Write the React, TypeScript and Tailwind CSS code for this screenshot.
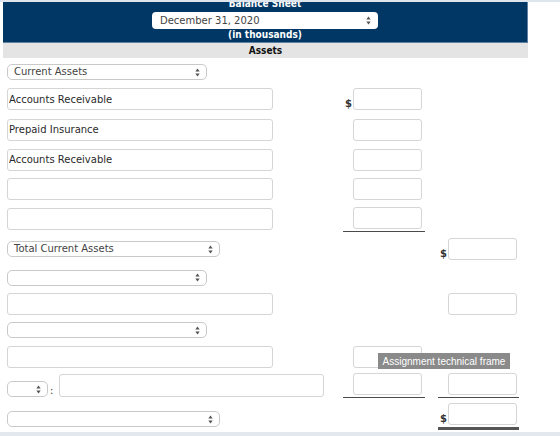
import clsx from 'clsx'
import type { ReactNode } from 'react'

function Arrows() {
  return (
    <svg width="5" height="9" viewBox="0 0 5 9" className="shrink-0">
      <path d="M2.5 0.5 L4.7 3.6 L0.3 3.6 Z" fill="#555" />
      <path d="M2.5 8.5 L4.7 5.4 L0.3 5.4 Z" fill="#555" />
    </svg>
  )
}

function Dropdown({ label, className }: { label?: string; className: string }) {
  return (
    <div
      className={clsx(
        'h-[16px] flex items-center justify-between rounded-[5px] border border-[#c9c9c9] bg-white pl-[6px] pr-[6px] text-[10px] text-[#444]',
        className
      )}
    >
      <span className="leading-none">{label}</span>
      <Arrows />
    </div>
  )
}

function Field({ value, className }: { value?: string; className: string }) {
  return (
    <input
      readOnly
      value={value ?? ''}
      className={clsx(
        'h-[22px] rounded-[3px] border border-[#d5d5d5] bg-white px-[1px] text-[10px] text-[#2a2a2a] outline-none',
        className
      )}
    />
  )
}

type Amount = { dollar?: boolean; rule?: 'single' | 'double' } | null

function Money({ amount, col }: { amount: Amount; col: 2 | 3 }) {
  const base = col === 2 ? 'w-[82px] ml-[70px] pr-[3px]' : 'w-[81px] ml-[13px] pr-[2px]'
  if (!amount) return <div className={clsx('shrink-0', base)} />
  return (
    <div
      className={clsx(
        'shrink-0 flex items-end justify-end',
        base,
        amount.rule === 'single' && 'border-b border-[#4a4a4a] pb-[2px]',
        amount.rule === 'double' && 'border-b-[3px] border-[#555] pb-[2px]'
      )}
    >
      {amount.dollar && <span className="mr-[1px] mb-[1px] text-[10px] font-bold leading-none text-[#333]">$</span>}
      <Field className="w-[69px]" />
    </div>
  )
}

function Row({
  h,
  left,
  c2 = null,
  c3 = null,
}: {
  h: string
  left?: ReactNode
  c2?: Amount
  c3?: Amount
}) {
  return (
    <div className={clsx('flex items-center pl-[7px]', h)}>
      <div className="w-[266px] shrink-0 flex items-center">{left}</div>
      <Money amount={c2} col={2} />
      <Money amount={c3} col={3} />
    </div>
  )
}

export default function App() {
  return (
    <div className="relative w-[560px] h-[436px] overflow-hidden bg-white font-['DejaVu_Sans',Verdana,sans-serif]">
      <div className="h-[2px] bg-[#dfe5ec]" />

      <div className="ml-[3px] w-[525px] font-['DejaVu_Sans_Condensed','DejaVu_Sans',sans-serif] font-bold">
        <div className="h-[41px] overflow-hidden bg-[#003764] border-r border-b border-[#5f7fa3] flex flex-col items-center">
          <div className="-mt-[3px] h-[10px] text-[10px] leading-[10px] text-white">Balance Sheet</div>
          <div className="mt-[3px] h-[17px] w-[226px] shrink-0 flex items-center justify-between rounded-[4px] bg-white pl-[8px] pr-[7px] font-['DejaVu_Sans',sans-serif] font-normal text-[10px] text-[#444]">
            <span>December 31, 2020</span>
            <Arrows />
          </div>
          <div className="text-[10px] leading-[12px] text-white">(in thousands)</div>
        </div>
        <div className="h-[15px] bg-[#e4e4e4] text-center text-[10px] leading-[15px] text-[#111]">Assets</div>
      </div>

      <Row h="h-[26px] pt-[2px]" left={<Dropdown label="Current Assets" className="w-[200px]" />} />
      <Row h="h-[30px]" left={<Field value="Accounts Receivable" className="w-[266px]" />} c2={{ dollar: true }} />
      <Row h="h-[31px]" left={<Field value="Prepaid Insurance" className="w-[266px]" />} c2={{}} />
      <Row h="h-[29px]" left={<Field value="Accounts Receivable" className="w-[266px]" />} c2={{}} />
      <Row h="h-[30px]" left={<Field className="w-[266px]" />} c2={{}} />
      <Row h="h-[30px]" left={<Field className="w-[266px]" />} c2={{ rule: 'single' }} />
      <Row h="h-[30px]" left={<Dropdown label="Total Current Assets" className="w-[213px]" />} c3={{ dollar: true }} />
      <Row h="h-[27px]" left={<Dropdown className="w-[200px]" />} />
      <Row h="h-[26px]" left={<Field className="w-[266px]" />} c3={{}} />
      <Row h="h-[26px]" left={<Dropdown className="w-[200px]" />} />
      <Row h="h-[27px]" left={<Field className="w-[266px]" />} c2={{}} />
      <Row
        h="h-[31px]"
        left={
          <div className="flex items-end shrink-0">
            <Dropdown className="w-[41px]" />
            <span className="ml-[2px] mr-[6px] text-[10px] leading-[12px] text-[#333]">:</span>
            <Field className="w-[265px] h-[23px]" />
          </div>
        }
        c2={{ rule: 'single' }}
        c3={{ rule: 'single' }}
      />
      <Row h="h-[31px]" left={<Dropdown className="w-[213px] mt-[5px]" />} c3={{ dollar: true, rule: 'double' }} />

      <div className="h-[4px] bg-[#e3e8ee]" />

      <div className="absolute left-[378px] top-[353px] w-[132px] h-[16px] bg-[#8a8a8a] flex items-center justify-center font-['Liberation_Sans',Arial,sans-serif] text-[10px] text-white">
        Assignment technical frame
      </div>
    </div>
  )
}
